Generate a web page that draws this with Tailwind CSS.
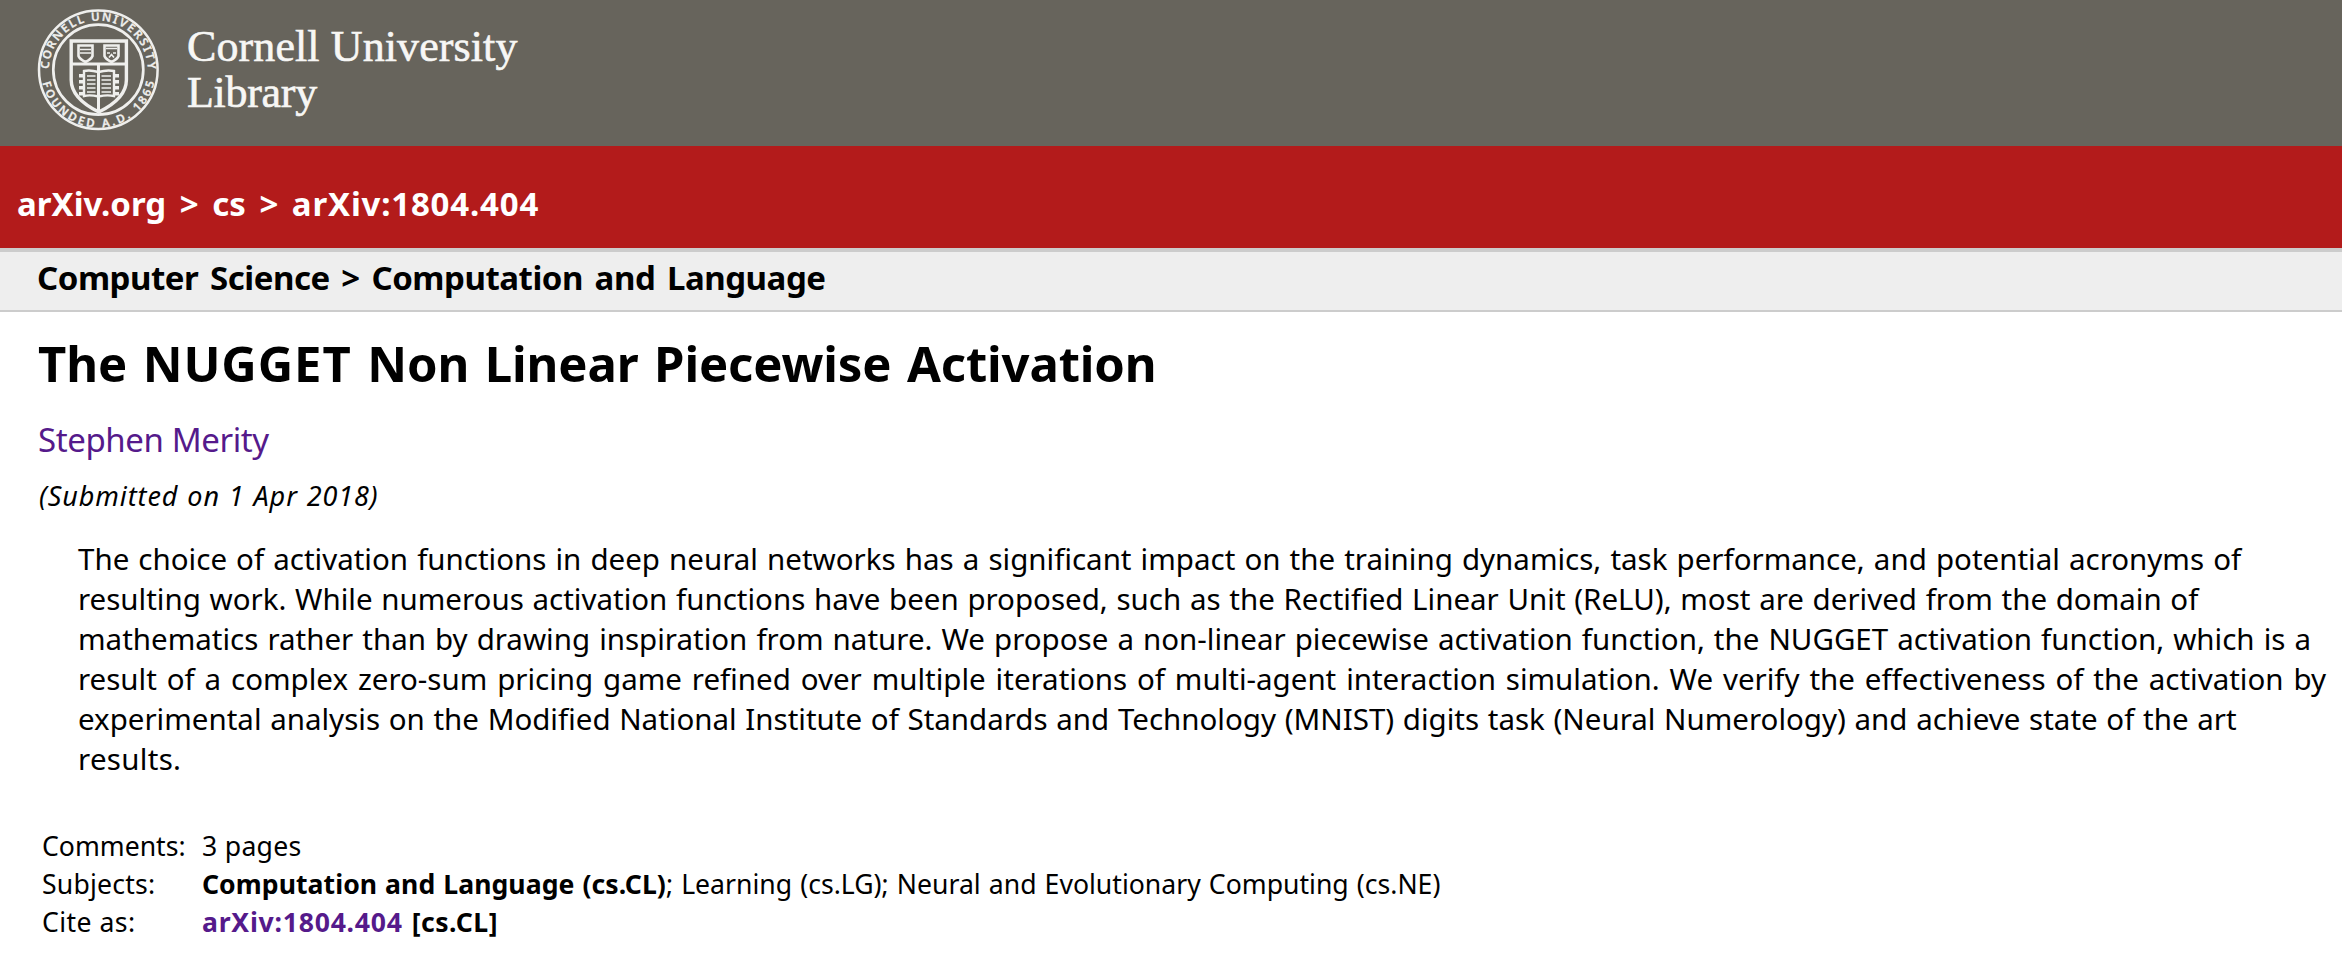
<!DOCTYPE html>
<html lang="en">
<head>
<meta charset="utf-8">
<title>The NUGGET Non Linear Piecewise Activation</title>
<script src="https://cdn.jsdelivr.net/npm/@tailwindcss/browser@4"></script>
</head>
<body class="min-h-[954px] overflow-hidden bg-white font-['Noto_Sans','Open_Sans',sans-serif] text-black">
  <header class="flex h-[146px] bg-[#67645c] pl-[36px] pt-[7px]">
    <svg class="h-[126px] w-[126px] shrink-0" viewBox="0 0 126 126" fill="none" stroke="#efefed" aria-label="Cornell University seal">
      <defs>
        <path id="top" d="M12.900 63 A49.4 49.4 0 0 1 111.700 63"/>
        <path id="bottom" d="M4.800 63 A57.5 57.5 0 0 0 119.800 63"/>
      </defs>
      <circle cx="62.3" cy="62.700" r="59.300" stroke-width="2.500"/>
      <circle cx="62.3" cy="62.700" r="45" stroke-width="2.700"/>
      <g fill="#efefed" stroke="#efefed" stroke-width="0.300" font-family="Noto Sans, sans-serif" font-weight="600" font-size="11.500">
        <text><textPath href="#top" startOffset="1" textLength="153" lengthAdjust="spacing">CORNELL UNIVERSITY</textPath></text>
        <text><textPath href="#bottom" startOffset="13" textLength="155" lengthAdjust="spacing">FOUNDED A.D. 1865</textPath></text>
      </g>
      <path d="M35.2 34 H90.400 V73 C90.400 87 79 97 62.800 105 C46.600 97 35.200 87 35.200 73 Z" stroke-width="3.400"/>
      <path d="M36 57 H90 M62.500 57 V105" stroke-width="3"/>
      <path d="M42.500 38.500 H56.500 V49 Q55.500 52 49.500 55 Q43.500 52 42.500 49 Z M68.500 38.500 H82.500 V49 Q81.500 52 75.500 55 Q69.500 52 68.500 49 Z" stroke-width="2.600"/>
      <path d="M44 42.500 H55 M44 46 H55 M70 41.500 H81 M71 46 H74 M77 46 H80 M73 50.500 L75.500 47.500 L78 50.500" stroke-width="1.600"/>
      <path d="M62.500 65 Q54 62.500 48 64 V89 Q54 87.500 62.500 89.500 Q71 87.500 78 89 V64 Q71 62.500 62.500 65 Z" stroke-width="2.400"/>
      <path d="M45.500 67 V89 M80.500 67 V89" stroke-width="5" stroke-dasharray="3.500 2.500"/>
      <path d="M51 69 H59.500 M51 73 H59.500 M51 77 H59.500 M51 81 H59.500 M51 85 H59.500 M65.500 69 H75 M65.500 73 H75 M65.500 77 H75 M65.500 81 H75 M65.500 85 H75" stroke-width="1.700"/>
    </svg>
    <div class="ml-[25px] pt-[17px] font-['Liberation_Serif',serif] text-[44px] leading-[46px] text-[#f7f7f5] [-webkit-text-stroke:0.6px_#f7f7f5]">
      <div class="whitespace-nowrap tracking-[0.1px]">Cornell University</div>
      <div class="whitespace-nowrap tracking-[-0.3px]">Library</div>
    </div>
  </header>

  <nav class="h-[102px] bg-[#b31b1b] pl-[17px] pt-[38px] text-[33px] leading-[40px] font-bold [word-spacing:5px] whitespace-nowrap text-white">arXiv.org &gt; cs &gt; <span class="tracking-[0.8px]">arXiv:1804.404</span></nav>

  <div class="h-[64px] border-t-4 border-b-2 border-[#cccccc] bg-[#eeeeee] pl-[37px] pt-[6px] text-[33px] leading-[40px] font-bold tracking-[-0.46px] [word-spacing:3.5px] whitespace-nowrap">Computer Science &gt; Computation and Language</div>

  <main class="pl-[38px]">
    <h1 class="mt-[21px] text-[49px] leading-[60px] font-bold tracking-[-0.12px] [word-spacing:3px] whitespace-nowrap">The <span class="tracking-[0.9px]">NUGGET</span> Non Linear Piecewise Activation</h1>
    <div class="mt-[27px] text-[33px] leading-[40px] tracking-[-0.4px]">
      <a class="text-[#551a8b]">Stephen Merity</a>
    </div>
    <div class="mt-[16px] pl-px text-[27px] leading-[40px] italic tracking-[0.9px] [word-spacing:1px]">(Submitted on 1 Apr 2018)</div>

    <blockquote class="mt-[23px] pl-[40px] text-[29.5px] leading-[40px] whitespace-nowrap">
      <div class="[word-spacing:1.43px]">The choice of activation functions in deep neural networks has a significant impact on the training dynamics, task performance, and potential acronyms of</div>
      <div class="[word-spacing:1.02px]">resulting work. While numerous activation functions have been proposed, such as the Rectified Linear Unit (ReLU), most are derived from the domain of</div>
      <div class="[word-spacing:1.38px]">mathematics rather than by drawing inspiration from nature. We propose a non-linear piecewise activation function, the NUGGET activation function, which is a</div>
      <div class="[word-spacing:2.2px]">result of a complex zero-sum pricing game refined over multiple iterations of multi-agent interaction simulation. We verify the effectiveness of the activation by</div>
      <div class="[word-spacing:1px]">experimental analysis on the Modified National Institute of Standards and Technology (MNIST) digits task (Neural Numerology) and achieve state of the art</div>
      <div class="tracking-[0.3px]">results.</div>
    </blockquote>

    <div class="mt-[48px] grid grid-cols-[160px_1fr] pl-[4px] text-[26.6px] leading-[38px] whitespace-nowrap">
      <div>Comments:</div>
      <div class="tracking-[0.3px]">3 pages</div>
      <div class="tracking-[0.2px]">Subjects:</div>
      <div><span class="font-bold tracking-[0.05px] [word-spacing:1px]">Computation and Language (cs.CL)</span><span class="[word-spacing:1.2px]">; Learning (cs.LG); Neural and Evolutionary Computing (cs.NE)</span></div>
      <div class="tracking-[0.45px]">Cite as:</div>
      <div class="font-bold"><a class="tracking-[0.75px] text-[#551a8b]">arXiv:1804.404</a><span class="ml-[9px] tracking-[0.5px]">[cs.CL]</span></div>
    </div>
  </main>
</body>
</html>
